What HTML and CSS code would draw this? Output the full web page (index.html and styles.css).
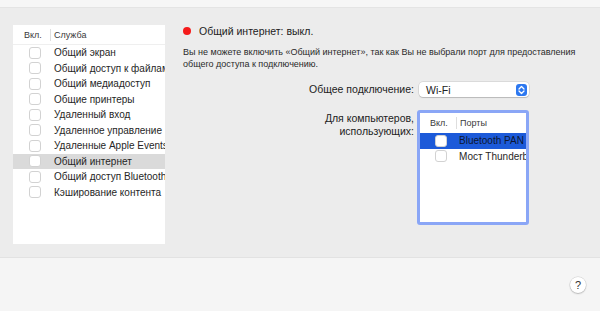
FILE: index.html
```html
<!DOCTYPE html>
<html lang="ru">
<head>
    <meta charset="UTF-8">
    <meta name="viewport" content="width=device-width, initial-scale=1.0">
    <title>Общий доступ</title>
    <link rel="stylesheet" href="styles.css">
</head>
<body>

<div class="top-strip"></div>

<div class="main">
    <div class="services">
        <div class="list-head">
            <span class="col-on">Вкл.</span>
            <span class="col-name">Служба</span>
        </div>
        <div class="row"><span class="check"></span><span class="label">Общий экран</span></div>
        <div class="row"><span class="check"></span><span class="label">Общий доступ к файлам</span></div>
        <div class="row"><span class="check"></span><span class="label">Общий медиадоступ</span></div>
        <div class="row"><span class="check"></span><span class="label">Общие принтеры</span></div>
        <div class="row"><span class="check"></span><span class="label">Удаленный вход</span></div>
        <div class="row"><span class="check"></span><span class="label">Удаленное управление</span></div>
        <div class="row"><span class="check"></span><span class="label">Удаленные Apple Events</span></div>
        <div class="row selected"><span class="check"></span><span class="label">Общий интернет</span></div>
        <div class="row"><span class="check"></span><span class="label">Общий доступ Bluetooth</span></div>
        <div class="row"><span class="check"></span><span class="label">Кэширование контента</span></div>
    </div>

    <div class="details">
        <div class="status">
            <span class="dot"></span>
            <span>Общий интернет: выкл.</span>
        </div>
        <p class="note">Вы не можете включить «Общий интернет», так как Вы не выбрали порт для предоставления общего доступа к подключению.</p>

        <div class="form">
            <div class="form-label">Общее подключение:</div>
            <div class="popup">
                <span>Wi-Fi</span>
                <span class="stepper">
                    <svg width="7" height="10" viewBox="0 0 7 10">
                        <path d="M1 4 L3.5 1.5 L6 4 M1 6 L3.5 8.5 L6 6" fill="none" stroke="#fff" stroke-width="1.3" stroke-linecap="round" stroke-linejoin="round"/>
                    </svg>
                </span>
            </div>

            <div class="form-label two-line">Для компьютеров,<br>использующих:</div>
            <div class="ports">
                <div class="list-head">
                    <span class="col-on">Вкл.</span>
                    <span class="col-name">Порты</span>
                </div>
                <div class="row active"><span class="check"></span><span class="label">Bluetooth PAN</span></div>
                <div class="row"><span class="check"></span><span class="label">Мост Thunderbolt</span></div>
            </div>
        </div>
    </div>
</div>

<div class="footer">
    <button class="help">?</button>
</div>

</body>
</html>
```

FILE: styles.css
```css
body {
    margin: 0;
    width: 600px;
    height: 311px;
    overflow: hidden;
    background: #ececec;
    font-family: "Liberation Sans", Arial, sans-serif;
    color: #222;
}
.top-strip {
    height: 7px;
    background: #f6f6f6;
    border-bottom: 1px solid #e4e4e4;
}
.main {
    display: flex;
    height: 232px;
    padding: 17px 0 0 13px;
}
.services {
    width: 152px;
    height: 219px;
    background: #ffffff;
    overflow: hidden;
}
.list-head {
    display: flex;
    align-items: center;
    height: 20px;
    font-size: 9px;
    color: #3a3a3a;
    border-bottom: 1px solid #efefef;
    box-sizing: border-box;
}
.list-head .col-on {
    width: 37px;
    padding-left: 11px;
    box-sizing: border-box;
}
.list-head .col-name {
    border-left: 1px solid #dedede;
    padding-left: 3px;
    line-height: 12px;
}
.row {
    display: flex;
    align-items: center;
    height: 15.5px;
    font-size: 10px;
    color: #262626;
    white-space: nowrap;
}
.row .check {
    flex: none;
    width: 10px;
    height: 10px;
    margin-left: 16px;
    margin-right: 13px;
    border: 1px solid #d2d2d2;
    border-radius: 3px;
    background: #fff;
}
.row.selected {
    background: #dadada;
}
.details {
    margin-left: 18px;
    width: 410px;
}
.status {
    display: flex;
    align-items: center;
    font-size: 10.5px;
    color: #222;
    height: 12px;
}
.dot {
    width: 8px;
    height: 8px;
    border-radius: 50%;
    background: #f51b1b;
    margin-right: 8px;
}
.note {
    margin: 9px 0 0;
    font-size: 9px;
    line-height: 12px;
    color: #2a2a2a;
}
.form {
    display: grid;
    grid-template-columns: 231px auto;
    column-gap: 5px;
    row-gap: 13px;
    margin-top: 12px;
}
.form-label {
    text-align: right;
    font-size: 10.5px;
    line-height: 15px;
}
.form-label.two-line {
    line-height: 13px;
    padding-top: 2px;
}
.popup {
    display: flex;
    align-items: center;
    justify-content: space-between;
    width: 110px;
    height: 15px;
    box-sizing: border-box;
    padding: 0 2px 0 7px;
    background: #fff;
    border-radius: 4px;
    box-shadow: 0 0 0 0.5px rgba(0, 0, 0, 0.15), 0 1px 1px rgba(0, 0, 0, 0.15);
    font-size: 10.5px;
}
.stepper {
    display: flex;
    align-items: center;
    justify-content: center;
    width: 11px;
    height: 12px;
    border-radius: 3px;
    background: #2d78f0;
}
.ports {
    width: 112px;
    height: 115px;
    margin-left: -2px;
    box-sizing: border-box;
    border: 3px solid #8aa6f6;
    border-radius: 3px;
    background: #fff;
    overflow: hidden;
}
.ports .list-head {
    height: 20px;
    border-bottom: none;
}
.ports .list-head .col-on {
    width: 36px;
    padding-left: 10px;
}
.ports .row .check {
    margin-left: 15px;
    margin-right: 12px;
}
.ports .row.active {
    background: #1c5ad9;
    color: #0d1630;
}
.footer {
    height: 53px;
    background: #f5f5f5;
    border-top: 1px solid #e2e2e2;
    display: flex;
    justify-content: flex-end;
    align-items: flex-start;
}
.help {
    margin: 19px 14px 0 0;
    width: 16px;
    height: 16px;
    padding: 0;
    border: none;
    border-radius: 50%;
    background: #fff;
    box-shadow: 0 0 0 0.5px rgba(0, 0, 0, 0.15), 0 1px 1.5px rgba(0, 0, 0, 0.2);
    font-family: "Liberation Sans", Arial, sans-serif;
    font-size: 11px;
    color: #333;
    line-height: 16px;
}
```
